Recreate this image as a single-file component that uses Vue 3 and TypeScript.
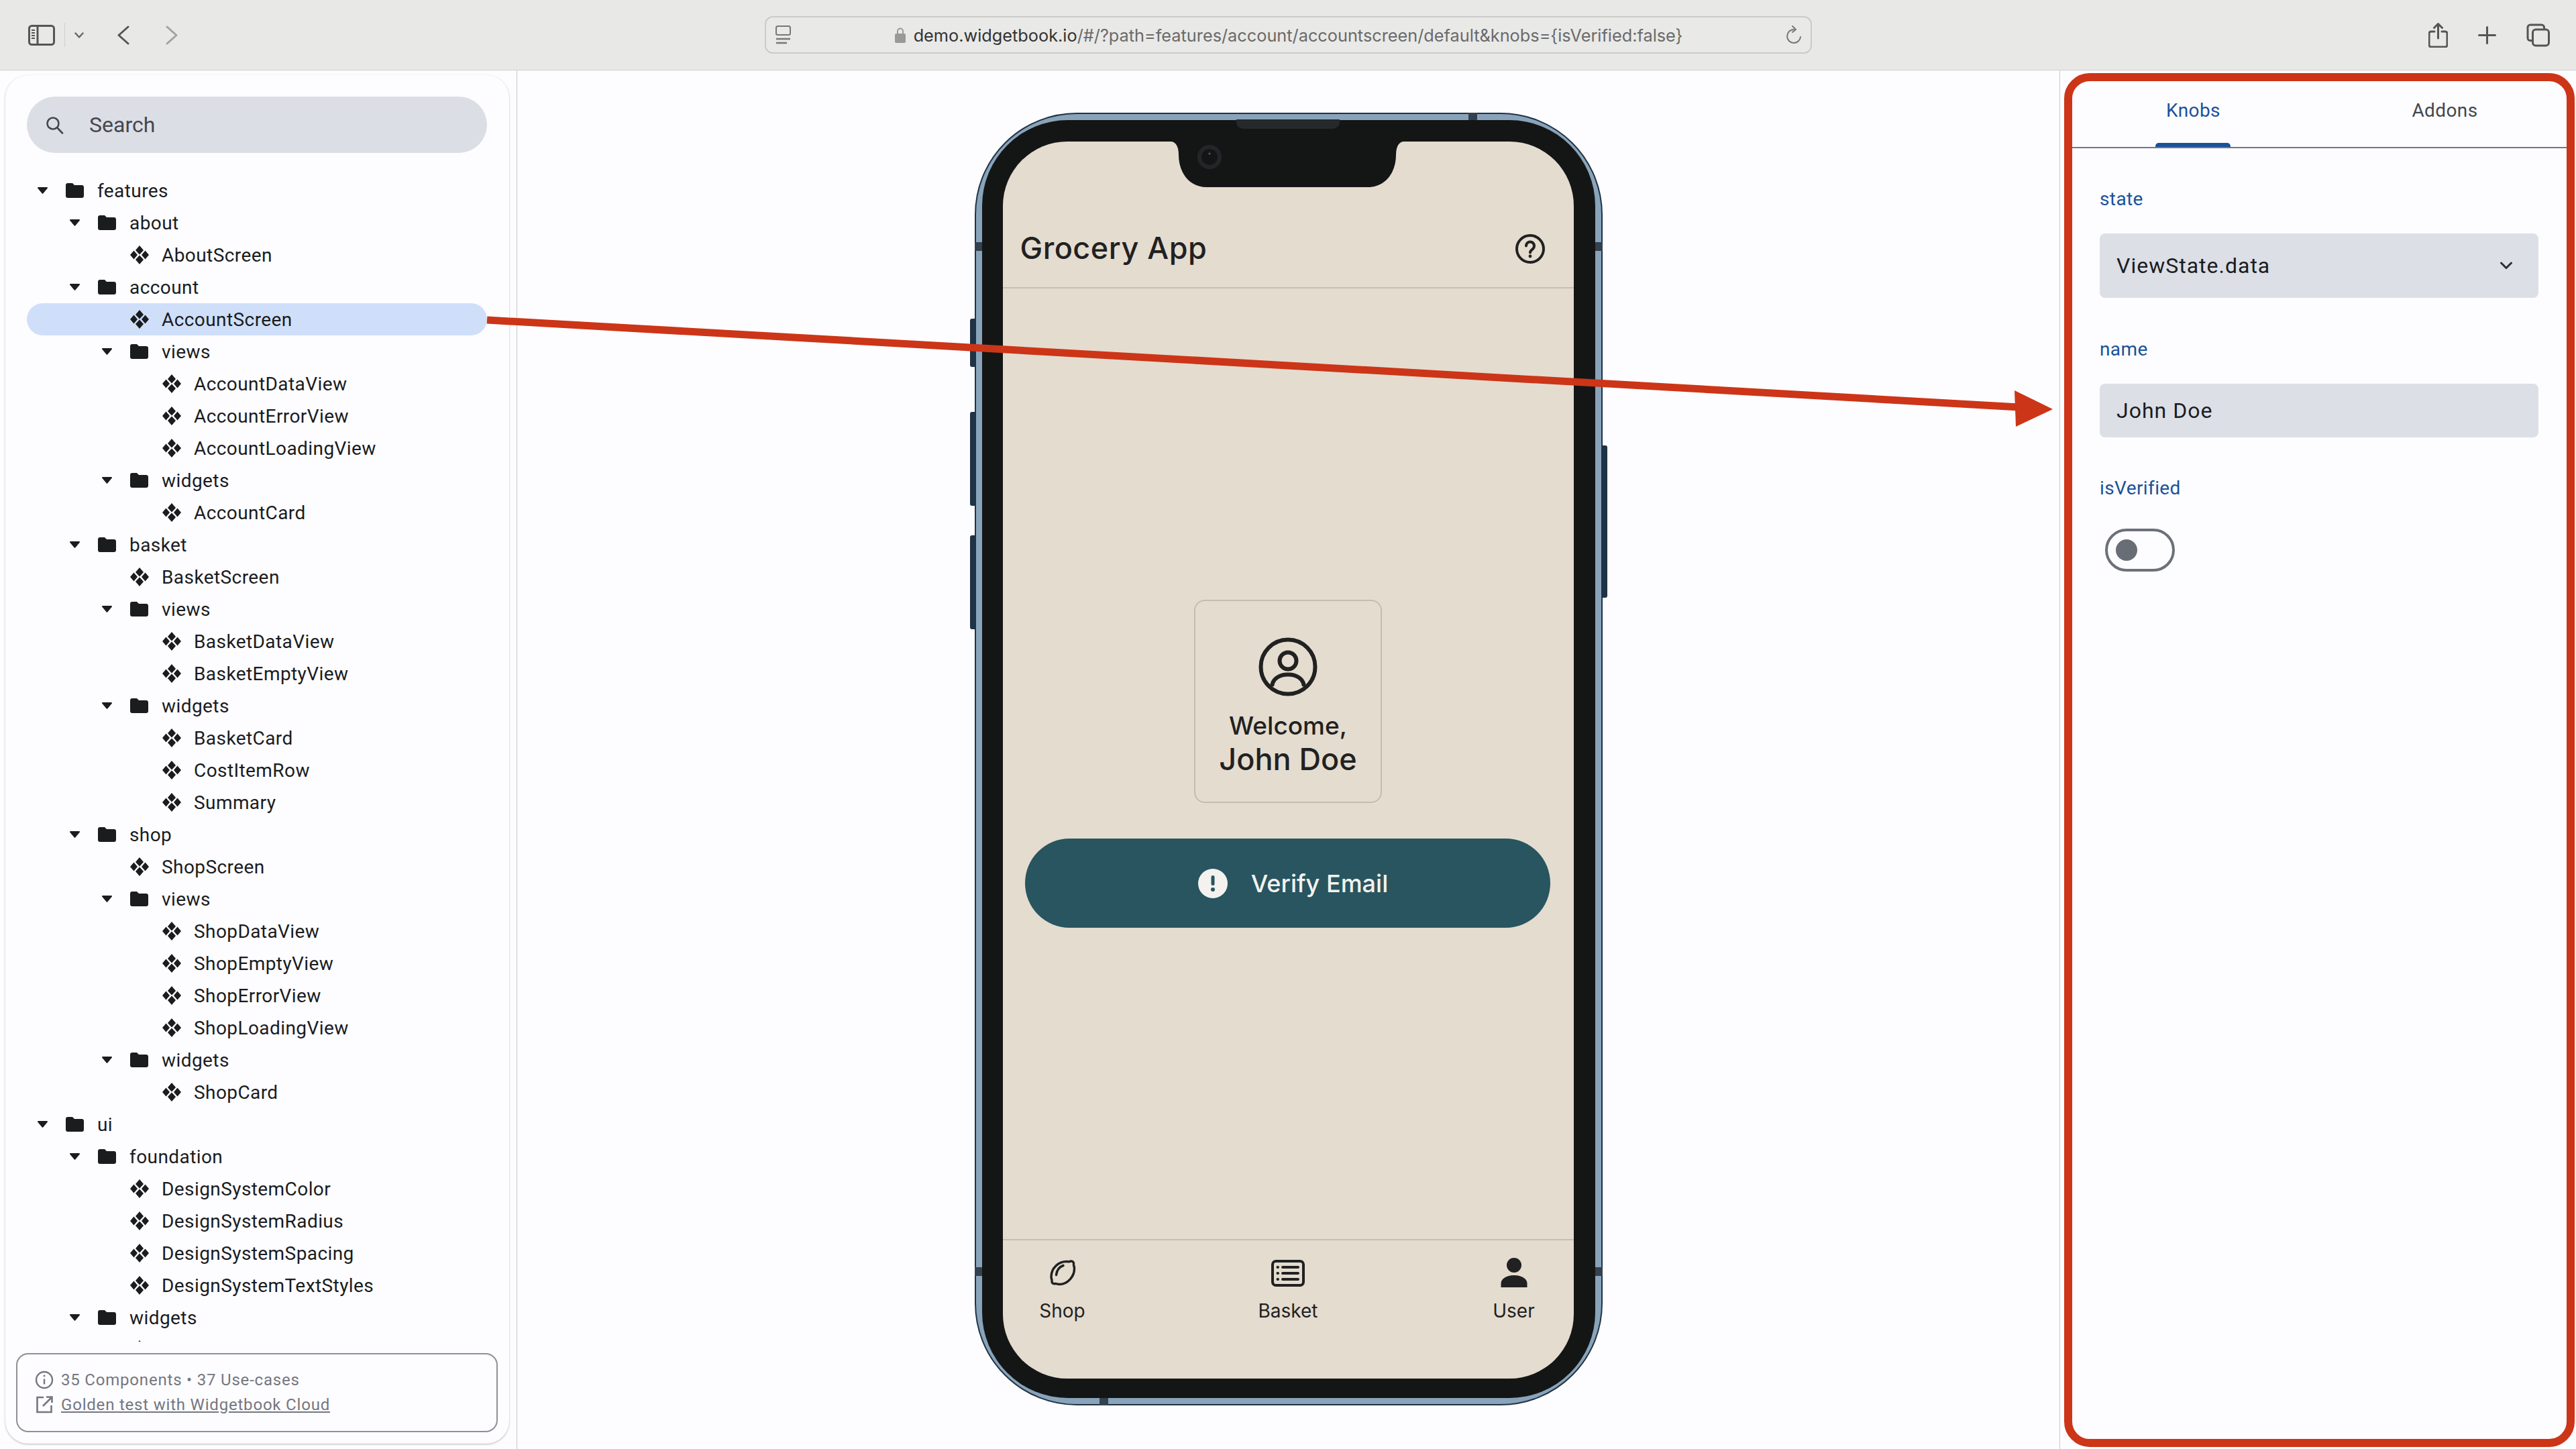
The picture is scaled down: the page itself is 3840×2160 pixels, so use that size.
<script setup lang="ts">
interface TreeRow {
  name: string
  level: number
  leaf: boolean
}

// "level name" for folders, "level* name" for components
const spec = [
  '0 features', '1 about', '2* AboutScreen', '1 account', '2* AccountScreen', '2 views',
  '3* AccountDataView', '3* AccountErrorView', '3* AccountLoadingView', '2 widgets', '3* AccountCard',
  '1 basket', '2* BasketScreen', '2 views', '3* BasketDataView', '3* BasketEmptyView', '2 widgets',
  '3* BasketCard', '3* CostItemRow', '3* Summary', '1 shop', '2* ShopScreen', '2 views',
  '3* ShopDataView', '3* ShopEmptyView', '3* ShopErrorView', '3* ShopLoadingView', '2 widgets', '3* ShopCard',
  '0 ui', '1 foundation', '2* DesignSystemColor', '2* DesignSystemRadius', '2* DesignSystemSpacing',
  '2* DesignSystemTextStyles', '1 widgets', '2* '
]

const rows: TreeRow[] = spec.map((s) => {
  const [head, name] = s.split(' ')
  return { name, level: parseInt(head), leaf: head.endsWith('*') }
})

const indent = (r: TreeRow) => ({ paddingLeft: `${(r.leaf ? 58 : 16) + r.level * 48}px` })
</script>

<template>
  <div class="app">
    <header class="toolbar">
      <div class="tb-left">
        <svg class="ic-sidebar" width="40" height="31" viewBox="0 0 40 31" fill="none" stroke="#555" stroke-width="3">
          <rect x="1.5" y="1.5" width="37" height="28" rx="4" />
          <path d="M14 2v27" />
          <path d="M5 8h5M5 12h5M5 16h5M5 20h5" stroke-width="2" />
        </svg>
        <span class="tb-sep"></span>
        <svg class="ic-caret" width="14" height="9" viewBox="0 0 14 9" fill="none" stroke="#666" stroke-width="2.4" stroke-linecap="round" stroke-linejoin="round">
          <path d="M1.5 1.5 7 7.5l5.5-6" />
        </svg>
        <svg class="ic-back" width="18" height="29" viewBox="0 0 18 29" fill="none" stroke="#555" stroke-width="3" stroke-linecap="round" stroke-linejoin="round">
          <path d="M16 2 2 14.5 16 27" />
        </svg>
        <svg class="ic-fwd" width="18" height="29" viewBox="0 0 18 29" fill="none" stroke="#a3a3a3" stroke-width="3" stroke-linecap="round" stroke-linejoin="round">
          <path d="M2 2l14 12.500L2 27" />
        </svg>
      </div>
      <div class="address">
        <svg width="23" height="28" viewBox="0 0 23 28" fill="none" stroke="#777" stroke-width="2">
          <rect x="1" y="1" width="21" height="13" rx="2.500" />
          <path d="M1 20h21" stroke-width="2.500" />
          <path d="M1 26h16" stroke-width="2.500" />
        </svg>
        <div class="url">
          <svg width="16" height="24" viewBox="0 0 16 24" fill="none">
            <path d="M4 11V6.500a4 4 0 0 1 8 0V11" stroke="#999" stroke-width="2" />
            <rect y="10" width="16" height="14" rx="2" fill="#999" />
          </svg>
          <span><span class="url-host">demo.widgetbook.io</span>/#/?path=features/account/accountscreen/default&amp;knobs={isVerified:false}</span>
        </div>
        <svg width="22" height="28" viewBox="0 0 22 28" fill="none" stroke="#777" stroke-width="2" stroke-linecap="round" stroke-linejoin="round">
          <path d="M11 6a10 10 0 1 0 10 11" />
          <path d="M9 1l5 5-5 4" />
        </svg>
      </div>
      <div class="tb-right">
        <svg width="29" height="37" viewBox="0 0 29 37" fill="none" stroke="#555" stroke-width="3" stroke-linecap="round" stroke-linejoin="round">
          <path d="M9 13H4a3 3 0 0 0-3 3v17a3 3 0 0 0 3 3h21a3 3 0 0 0 3-3V16a3 3 0 0 0-3-3h-5" />
          <path d="M14.500 23V2M8.500 7.500l6-6 6 6" />
        </svg>
        <svg width="27" height="27" viewBox="0 0 27 27" fill="none" stroke="#555" stroke-width="3" stroke-linecap="round">
          <path d="M13.500 1.500v24M1.500 13.500h24" />
        </svg>
        <svg width="35" height="35" viewBox="0 0 35 35" fill="none" stroke="#555" stroke-width="3">
          <path d="M26.500 9V6a4 4 0 0 0-4-4H6a4 4 0 0 0-4 4v15.500a4 4 0 0 0 4 4h3" />
          <rect x="9.500" y="9" width="24" height="24" rx="4.500" />
        </svg>
      </div>
    </header>

    <div class="content">
      <aside class="sidebar">
        <div class="nav-card">
          <div class="search">
            <svg width="27" height="27" viewBox="0 0 27 27" fill="none" stroke="#44474e" stroke-width="2.600" stroke-linecap="round">
              <circle cx="11" cy="11" r="8.500" />
              <path d="M17.500 17.500 25 25.500" />
            </svg>
            <span>Search</span>
          </div>
          <div class="tree">
            <div v-for="(r, i) in rows" :key="i" class="row" :class="{ selected: r.name === 'AccountScreen' }" :style="indent(r)">
              <template v-if="r.leaf">
                <svg class="leaf" width="28" height="28" viewBox="0 0 28 28" fill="#1a1c1e">
                  <path d="M14 0l6 7-6 6.500L8 7zM5.500 7.500 11 14l-5.500 6.500L0 14zM22.500 7.500 28 14l-5.500 6.500L17 14zM14 14.500l6 6.500-6 7-6-7z" />
                </svg>
              </template>
              <template v-else>
                <svg class="caret" width="15" height="10" viewBox="0 0 15 10" fill="#1a1c1e">
                  <path d="M1 0h13a1 1 0 0 1 .7 1.700L8.200 9.500a1 1 0 0 1-1.400 0L.3 1.700A1 1 0 0 1 1 0z" />
                </svg>
                <svg class="folder" width="27" height="22" viewBox="0 0 27 22" fill="#1a1c1e">
                  <path d="M10 0H3C1.300 0 0 1.300 0 3v16c0 1.700 1.300 3 3 3h21c1.700 0 3-1.300 3-3V6c0-1.700-1.300-3-3-3H13z" />
                </svg>
              </template>
              <span>{{ r.name }}</span>
            </div>
          </div>
          <div class="stats">
            <div class="stat-line">
              <svg width="28" height="28" viewBox="0 0 28 28" fill="none" stroke="#74777f" stroke-width="2.400">
                <circle cx="14" cy="14" r="12" />
                <path d="M14 12.500v8" />
                <circle cx="14" cy="8" r="1.400" fill="#74777f" stroke="none" />
              </svg>
              <span>35 Components • 37 Use-cases</span>
            </div>
            <div class="stat-line">
              <svg width="28" height="28" viewBox="0 0 28 28" fill="none" stroke="#74777f" stroke-width="2.600">
                <path d="M13 3H3.500v22h21V15" />
                <path d="M12 16 25 3M17 2.500h8.500V11" />
              </svg>
              <span class="link">Golden test with Widgetbook Cloud</span>
            </div>
          </div>
        </div>
      </aside>

      <main class="stage">
        <div class="phone">
          <span class="side-btn b1"></span>
          <span class="side-btn b2"></span>
          <span class="side-btn b3"></span>
          <span class="side-btn b4"></span>
          <span class="band top"></span>
          <span class="band bottom"></span>
          <span class="band left l1"></span>
          <span class="band left l2"></span>
          <span class="band right l1"></span>
          <span class="band right l2"></span>
          <div class="bezel">
            <span class="speaker"></span>
            <svg class="notch" width="348" height="68" viewBox="0 0 348 68" fill="#141616">
              <path d="M0 0h348c-8 0-12 8-12 20 0 24-14 48-42 48H54C26 68 12 44 12 20 12 8 8 0 0 0z" />
              <circle cx="58" cy="23" r="15" fill="#141616" stroke="#232628" stroke-width="6" />
              <circle cx="58" cy="18" r="1.600" fill="#555a5c" />
            </svg>
            <div class="screen">
              <div class="app-bar">
                <span class="app-title">Grocery App</span>
                <svg width="44" height="44" viewBox="0 0 44 44" fill="none" stroke="#212121" stroke-width="4" stroke-linecap="round">
                  <circle cx="22" cy="22" r="20" />
                  <path d="M16 17.500a6 6 0 1 1 9.600 4.800c-2.300 1.700-3.600 2.900-3.600 5.200" />
                  <circle cx="22" cy="33" r="2.400" fill="#212121" stroke="none" />
                </svg>
              </div>
              <div class="screen-body">
                <div class="welcome">
                  <svg width="88" height="88" viewBox="0 0 88 88" fill="none" stroke="#212121" stroke-width="6">
                    <circle cx="44" cy="44" r="40.500" />
                    <circle cx="44" cy="35" r="12.500" />
                    <path d="M20 73c1-11 11-17.500 24-17.500S67 62 68 73" />
                  </svg>
                  <div class="w-hello">Welcome,</div>
                  <div class="w-name">John Doe</div>
                </div>
                <div class="verify">
                  <svg width="44" height="44" viewBox="0 0 44 44">
                    <circle cx="22" cy="22" r="22" fill="#f3f2ef" />
                    <rect x="19.500" y="10" width="5" height="15" rx="2.500" fill="#28555f" />
                    <circle cx="22" cy="31" r="3" fill="#28555f" />
                  </svg>
                  <span>Verify Email</span>
                </div>
              </div>
              <nav class="tabbar">
                <div class="tab-item">
                  <svg width="40" height="44" viewBox="0 0 40 44" fill="none" stroke="#212121" stroke-width="3.500" stroke-linecap="round" stroke-linejoin="round">
                    <path d="M32 5c3-.5 5 1.500 4.500 4.500-.4 2 1 3 1 6C38 27 28 39.500 15 39.500c-3 0-4-1.500-6-1-3 .9-5.500-1-5-4 .5-2-1-3-1-6C3 15 14 5.500 26 5.500c2.500 0 4 1 6-.5z" />
                    <path d="M21 11.500c-6 2-9.500 6.500-10.500 14" />
                  </svg>
                  <span>Shop</span>
                </div>
                <div class="tab-item">
                  <svg width="50" height="44" viewBox="0 0 50 44" fill="none" stroke="#212121" stroke-width="4">
                    <rect x="2" y="5" width="46" height="36" rx="5" />
                    <path d="M17 14h23M17 23h23M17 32h23" stroke-linecap="round" />
                    <path d="M9.500 14h.5M9.500 23h.5M9.500 32h.5" stroke-linecap="round" />
                  </svg>
                  <span>Basket</span>
                </div>
                <div class="tab-item">
                  <svg width="40" height="44" viewBox="0 0 40 44" fill="#212121">
                    <ellipse cx="20" cy="11" rx="11" ry="11" />
                    <path d="M.5 44V38C.5 32 8 26 20 26s19.500 6 19.500 12v6z" />
                  </svg>
                  <span>User</span>
                </div>
              </nav>
            </div>
          </div>
        </div>
      </main>

      <aside class="knobs">
        <div class="tabs">
          <div class="tab active">Knobs</div>
          <div class="tab">Addons</div>
        </div>
        <div class="fields">
          <div class="label">state</div>
          <div class="control select">
            <span>ViewState.data</span>
            <svg width="20" height="12" viewBox="0 0 20 12" fill="none" stroke="#2b2e33" stroke-width="3" stroke-linecap="round" stroke-linejoin="round">
              <path d="M2.500 2 10 9.500 17.500 2" />
            </svg>
          </div>
          <div class="label">name</div>
          <div class="control input"><span>John Doe</span></div>
          <div class="label">isVerified</div>
          <div class="toggle"><span class="thumb"></span></div>
        </div>
      </aside>
    </div>

    <svg class="pointer" width="3840" height="2160" viewBox="0 0 3840 2160">
      <path d="M726 477 3010 607" stroke="#cc3517" stroke-width="11" fill="none" />
      <path d="M3060 610 3003 582 3005 636z" fill="#cc3517" />
    </svg>
  </div>
</template>

<style scoped>
.app {
  position: relative;
  width: 3840px;
  height: 2160px;
  display: flex;
  flex-direction: column;
  overflow: hidden;
  background: #fdfcff;
  font-family: Roboto, "Liberation Sans", sans-serif;
  color: #1a1c1e;
}

.toolbar {
  height: 104px;
  flex: none;
  display: flex;
  align-items: center;
  background: #e8e8e6;
  border-bottom: 1px solid #cfcfcf;
}
.tb-left {
  width: 1140px;
  flex: none;
  display: flex;
  align-items: center;
  padding-left: 42px;
  box-sizing: border-box;
}
.tb-sep { width: 1px; height: 36px; background: #cfcfcf; margin: 0 14px; }
.ic-back { margin-left: 50px; }
.ic-fwd { margin-left: 54px; }
.address {
  width: 1561px;
  height: 56px;
  flex: none;
  box-sizing: border-box;
  padding: 0 14px;
  display: flex;
  align-items: center;
  justify-content: space-between;
  border: 2px solid #cbcbc9;
  border-radius: 12px;
  background: #e9e9e7;
}
.url {
  display: flex;
  align-items: center;
  gap: 12px;
  font-family: Inter, sans-serif;
  font-size: 25.3px;
  color: #6a6a6a;
  white-space: nowrap;
}
.url-host { color: #333; }
.tb-right {
  flex: 1;
  display: flex;
  align-items: center;
  justify-content: flex-end;
  gap: 45px;
  padding-right: 39px;
}

.content {
  flex: 1;
  display: flex;
  min-height: 0;
}

.sidebar {
  width: 771px;
  flex: none;
  box-sizing: border-box;
  border-right: 1px solid #c9c9cb;
  padding: 7px 11px 0 8px;
}
.nav-card {
  height: 2040px;
  box-sizing: border-box;
  padding: 32px 33px 0 32px;
  border-radius: 34px;
  background: #fdfcff;
  box-shadow: 0 1px 3px rgba(0, 0, 0, 0.28);
}
.search {
  height: 84px;
  box-sizing: border-box;
  padding-left: 28px;
  display: flex;
  align-items: center;
  gap: 38px;
  border-radius: 42px;
  background: #dcdee6;
  font-size: 32px;
  color: #44474e;
}
.tree {
  height: 1740px;
  margin-top: 32px;
  overflow: hidden;
}
.row {
  height: 48px;
  display: flex;
  align-items: center;
  border-radius: 24px;
  font-size: 28px;
  letter-spacing: 0.42px;
  white-space: nowrap;
}
.row.selected { background: #cfdffa; }
.caret { flex: none; margin-right: 27px; }
.folder { flex: none; margin-right: 20px; }
.leaf { flex: none; margin-right: 19px; }

.stats {
  margin: 17px -16px 0 -16px;
  height: 118px;
  box-sizing: border-box;
  padding: 19px 26px 0;
  border: 2px solid #8f9095;
  border-radius: 18px;
  font-size: 24px;
  letter-spacing: 0.8px;
  color: #74777f;
}
.stat-line {
  height: 37px;
  display: flex;
  align-items: center;
  gap: 11px;
}
.link { text-decoration: underline; }

.stage {
  flex: 1;
  box-sizing: border-box;
  border-right: 1px solid #c9c9cb;
  padding-top: 63px;
  display: flex;
  justify-content: center;
  align-items: flex-start;
}

.phone {
  position: relative;
  width: 936px;
  height: 1927px;
  box-sizing: border-box;
  padding: 9px;
  border: 2px solid #1f3345;
  border-radius: 152px;
  background: #89a4ba;
}
.bezel {
  position: relative;
  height: 100%;
  box-sizing: border-box;
  padding: 32px 32px 29px 31px;
  border-radius: 128px;
  background: #141616;
}
.side-btn {
  position: absolute;
  width: 7px;
  background: #1f3345;
  border-radius: 3px 0 0 3px;
}
.b1 { left: -9px; top: 305px; height: 72px; }
.b2 { left: -9px; top: 444px; height: 140px; }
.b3 { left: -9px; top: 628px; height: 140px; }
.b4 { right: -9px; top: 494px; height: 227px; border-radius: 0 3px 3px 0; }
.band {
  position: absolute;
  background: #34414e;
  z-index: 1;
}
.band.top { top: -2px; left: 734px; width: 13px; height: 11px; }
.band.bottom { bottom: -2px; left: 184px; width: 13px; height: 11px; }
.band.left { left: -2px; width: 11px; height: 13px; }
.band.right { right: -2px; width: 11px; height: 13px; }
.band.l1 { top: 191px; }
.band.l2 { top: 1719px; }
.speaker {
  position: absolute;
  top: -1px;
  left: 379px;
  width: 154px;
  height: 14px;
  border-radius: 0 0 10px 10px;
  background: #25292b;
}
.notch {
  position: absolute;
  z-index: 2;
  top: 32px;
  left: 281px;
}

.screen {
  height: 100%;
  display: flex;
  flex-direction: column;
  border-radius: 96px;
  background: #e4dccf;
  overflow: hidden;
  font-family: Inter, "Noto Sans", sans-serif;
  color: #212121;
}
.app-bar {
  height: 219px;
  flex: none;
  box-sizing: border-box;
  padding: 138px 43px 0 26px;
  display: flex;
  justify-content: space-between;
  align-items: flex-start;
  border-bottom: 2px solid #c8bfb3;
}
.app-title {
  font-size: 45px;
  font-weight: 500;
  line-height: 54px;
  margin-top: -6px;
  letter-spacing: 0.5px;
}
.screen-body {
  flex: 1;
  display: flex;
  flex-direction: column;
  align-items: center;
  justify-content: center;
  gap: 53px;
}
.welcome {
  width: 280px;
  height: 303px;
  box-sizing: border-box;
  padding-top: 54px;
  display: flex;
  flex-direction: column;
  align-items: center;
  border: 2px solid #c6bdb1;
  border-radius: 16px;
}
.w-hello { font-size: 37px; font-weight: 500; line-height: 44px; margin-top: 22px; }
.w-name { font-size: 45px; font-weight: 500; line-height: 54px; margin-top: 1px; }
.verify {
  width: 783px;
  height: 133px;
  box-sizing: border-box;
  padding-left: 16px;
  display: flex;
  align-items: center;
  justify-content: center;
  gap: 35px;
  margin-left: -1px;
  border-radius: 67px;
  background: #28555f;
  color: #f3f2ef;
  font-size: 36px;
  font-weight: 500;
}
.tabbar {
  height: 208px;
  flex: none;
  box-sizing: border-box;
  padding: 26px 24px 0;
  display: flex;
  justify-content: space-between;
  align-items: flex-start;
  border-top: 2px solid #c8bfb3;
}
.tab-item {
  width: 130px;
  display: flex;
  flex-direction: column;
  align-items: center;
  font-size: 28px;
  line-height: 40px;
  gap: 15px;
}

.knobs {
  width: 761px;
  height: 2048px;
  flex: none;
  box-sizing: border-box;
  margin: 4px 2px 0 6px;
  border: 12px solid #cc3517;
  border-radius: 38px;
  background: #fdfcff;
}
.tabs {
  display: flex;
  border-bottom: 2px solid #74777f;
}
.tab {
  position: relative;
  width: 375px;
  height: 98px;
  flex: none;
  box-sizing: border-box;
  padding-top: 22px;
  text-align: center;
  font-size: 28px;
  line-height: 44px;
  letter-spacing: 0.4px;
  color: #44474e;
}
.tab:first-child { margin-left: -7px; }
.tab:last-child { margin-right: -5px; }
.tab.active { color: #1a5299; }
.tab.active::after {
  content: "";
  position: absolute;
  left: 131px;
  bottom: 0;
  width: 112px;
  height: 6px;
  border-radius: 5px 5px 0 0;
  background: #1a5299;
}
.fields { padding: 56px 42px 0 41px; }
.label {
  font-size: 28px;
  line-height: 40px;
  letter-spacing: 0.4px;
  color: #1a5299;
}
.control {
  display: flex;
  align-items: center;
  justify-content: space-between;
  box-sizing: border-box;
  padding: 0 38px 0 25px;
  margin: 31px 0 57px;
  border-radius: 8px;
  background: #dcdfe6;
  font-size: 32px;
  letter-spacing: 1px;
}
.select { height: 96px; }
.input { height: 80px; margin-bottom: 56px; }
.toggle {
  width: 104px;
  height: 64px;
  margin: 40px 0 0 8px;
  box-sizing: border-box;
  border: 4px solid #6c7078;
  border-radius: 32px;
  padding: 12px;
}
.thumb {
  display: block;
  width: 32px;
  height: 32px;
  border-radius: 50%;
  background: #696d75;
}

.pointer {
  position: absolute;
  top: 0;
  left: 0;
  z-index: 5;
  pointer-events: none;
}
</style>

<style>
html, body { margin: 0; background: #fdfcff; }
</style>
